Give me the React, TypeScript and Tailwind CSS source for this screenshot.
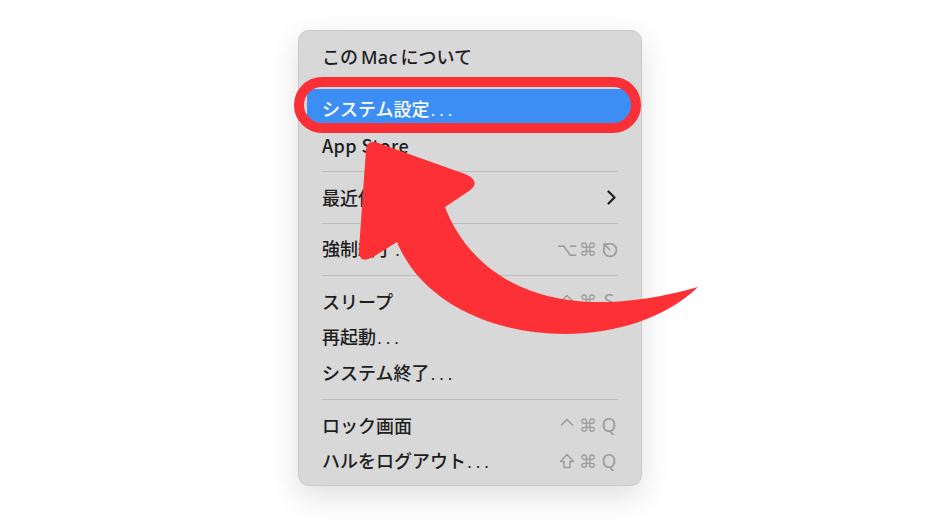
import type { ReactNode } from "react";

type Item =
  | { kind: "sep" }
  | { kind: "row"; label: ReactNode; keys?: string[]; esc?: boolean; sub?: boolean; active?: boolean };

const Dots = () => <span className="ml-[1px] tracking-[3.5px] font-['Liberation_Sans',sans-serif]">...</span>;

const items: Item[] = [
  {
    kind: "row",
    label: (
      <>
        この<span className="mx-[3px] font-['Noto_Sans',sans-serif] tracking-[0.3px]">Mac</span>について
      </>
    ),
  },
  { kind: "sep" },
  { kind: "row", label: <>システム設定<Dots /></>, active: true },
  { kind: "row", label: <span className="tracking-[0.4px]">App Store</span> },
  { kind: "sep" },
  { kind: "row", label: "最近使った項目", sub: true },
  { kind: "sep" },
  { kind: "row", label: <>強制終了<Dots /></>, keys: ["⌥", "⌘"], esc: true },
  { kind: "sep" },
  { kind: "row", label: "スリープ", keys: ["⌃", "⌘", "S"] },
  { kind: "row", label: <>再起動<Dots /></> },
  { kind: "row", label: <>システム終了<Dots /></> },
  { kind: "sep" },
  { kind: "row", label: "ロック画面", keys: ["⌃", "⌘", "Q"] },
  { kind: "row", label: <>ハルをログアウト<Dots /></>, keys: ["⇧", "⌘", "Q"] },
];

function EscIcon() {
  return (
    <svg width="17" height="17" viewBox="0 0 16 16" fill="none" stroke="currentColor" strokeWidth="1.6" strokeLinecap="round" strokeLinejoin="round">
      <path d="M7.4 2.6 A6 6 0 1 1 2.6 7.4" />
      <path d="M3.2 3.2 L8 8" />
      <path d="M3 6.6 L3 3 L6.6 3" />
    </svg>
  );
}

function Key({ k }: { k: string }) {
  if (k === "⌃")
    return (
      <svg width="14" height="18" viewBox="0 0 14 18" fill="none" stroke="currentColor" strokeWidth="1.6" strokeLinecap="round" strokeLinejoin="round">
        <path d="M1.5 9 L7 3.5 L12.5 9" />
      </svg>
    );
  if (k === "⇧")
    return (
      <svg width="16" height="18" viewBox="0 0 16 18" fill="none" stroke="currentColor" strokeWidth="1.5" strokeLinejoin="round">
        <path d="M8 2.5 L14.5 9.5 L11 9.5 L11 15.5 L5 15.5 L5 9.5 L1.5 9.5 Z" />
      </svg>
    );
  if (/[A-Z]/.test(k)) return <span className="text-[19px] font-['Noto_Sans',sans-serif]">{k}</span>;
  return <span className="text-[18px] font-['DejaVu_Sans',sans-serif]">{k}</span>;
}

function Row({ item }: { item: Extract<Item, { kind: "row" }> }) {
  return (
    <div className={`relative flex h-9 items-center px-[15px] ${item.active ? "text-white" : "text-[#1e1e1e]"}`}>
      {item.active && <span className="absolute inset-x-0 -top-[2px] bottom-[4px] rounded-[7px] bg-[#3c8ef5]" />}
      <span className="relative">{item.label}</span>
      <span className="relative ml-auto flex items-center gap-[3px] font-normal text-[#9c9c9c]">
        {item.keys?.map((k, i) => (
          <span key={i} className="flex w-[18px] justify-center">
            <Key k={k} />
          </span>
        ))}
        {item.esc && (
          <span className="flex w-[18px] justify-end">
            <EscIcon />
          </span>
        )}
        {item.sub && (
          <svg width="9" height="15" viewBox="0 0 9 15" fill="none" stroke="#1e1e1e" strokeWidth="2.2" strokeLinecap="round" strokeLinejoin="round" className="mr-[2px]">
            <path d="M1.5 1.5 L7.5 7.5 L1.5 13.5" />
          </svg>
        )}
      </span>
    </div>
  );
}

export default function App() {
  return (
    <div className="relative h-[528px] w-[940px] overflow-hidden bg-white font-['Noto_Sans_CJK_JP','Noto_Sans',sans-serif] text-[18px] font-medium">
      <div className="flex justify-center pt-[30px]">
        <div className="w-[344px] rounded-[11px] border border-[#c9c9c9] bg-[#d8d8d8] px-2 pb-[6px] pt-2 shadow-[0_10px_30px_rgba(0,0,0,0.13)]">
          {items.map((item, i) =>
            item.kind === "sep" ? (
              <div key={i} className="mx-[15px] my-[7.5px] h-px bg-[#bdbdbd]" />
            ) : (
              <Row key={i} item={item} />
            )
          )}
        </div>
      </div>

      <svg className="pointer-events-none absolute inset-0" width="940" height="528" viewBox="0 0 940 528">
        <rect x="299" y="82" width="337" height="46" rx="23" fill="none" stroke="#fb2f36" strokeWidth="10" />
        <path
          fill="#fd3035"
          d="M366 150 Q367 139 378 143 L465 174 Q482 181 469 191 L445 207 C468 268 540 332 698 287 C620 362 440 347 397 242 L373 257 Q358 265 359 249 Z"
        />
      </svg>
    </div>
  );
}
